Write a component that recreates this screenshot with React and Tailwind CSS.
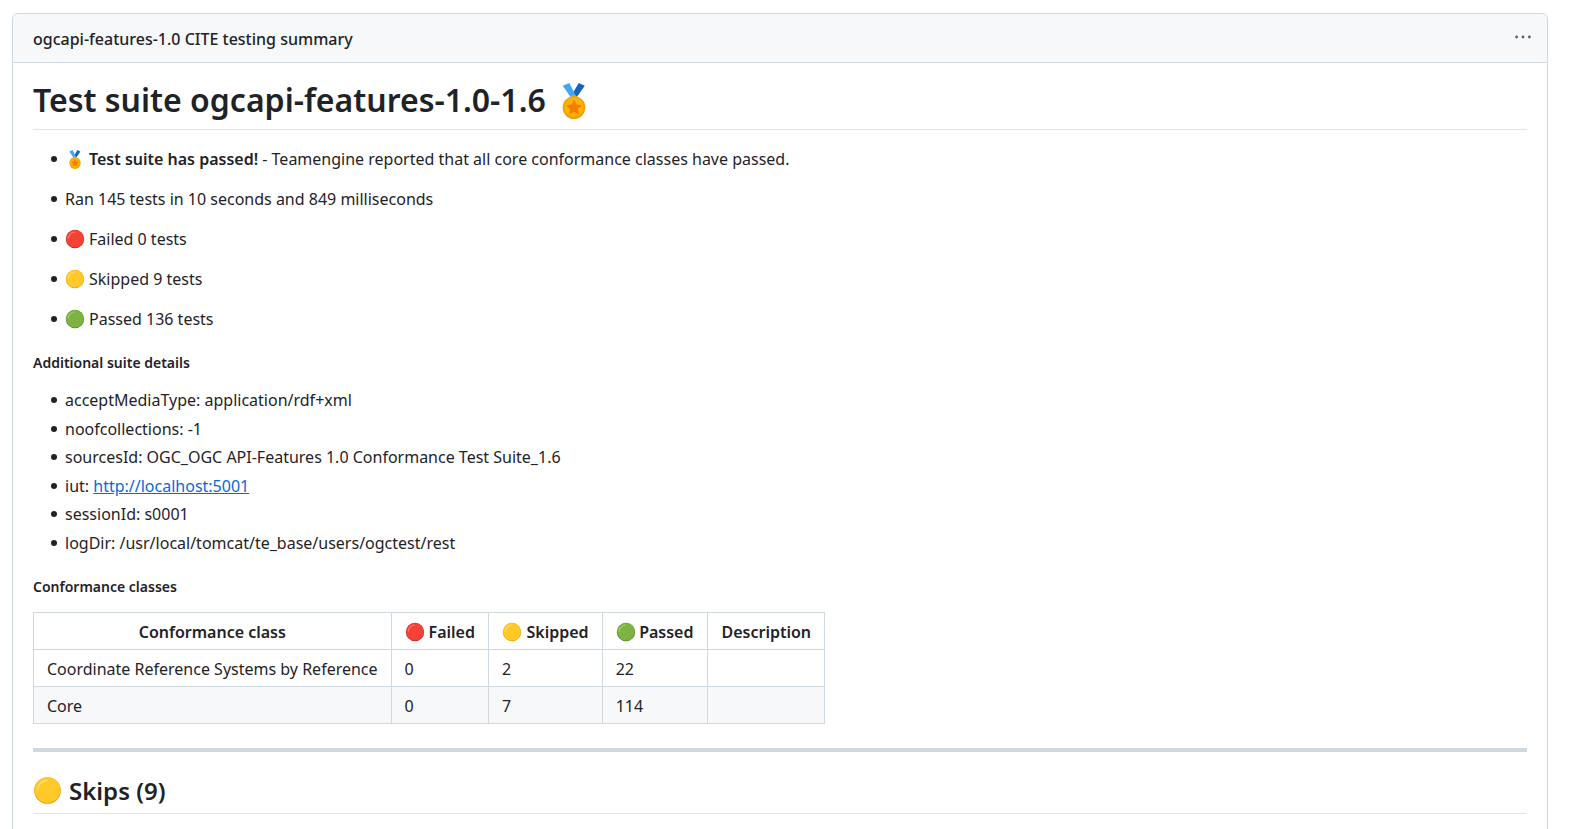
const Dot = ({ c, d, h, size = 20, className = "" }) => (
  <svg viewBox="0 0 20 20" width={size} height={size} className={`inline-block shrink-0 align-[-4px] ${className}`}>
    <circle cx="10" cy="10" r="9.2" fill={d} />
    <circle cx="10" cy="9.7" r="8.8" fill={c} />
    <path d="M3.2 9.5A6.8 6.8 0 0 1 9.5 3" fill="none" stroke={h} strokeWidth="1.1" strokeLinecap="round" opacity="0.75" />
  </svg>
);
const Red = (p) => <Dot c="#f44336" d="#c62828" h="#ff8a80" {...p} />;
const Yellow = (p) => <Dot c="#ffca28" d="#f59e0b" h="#ffe082" {...p} />;
const Green = (p) => <Dot c="#7cb342" d="#558b2f" h="#aed581" {...p} />;

const Medal = ({ w = 24, h = 36, className = "" }) => (
  <svg viewBox="0 0 24 36" width={w} height={h} preserveAspectRatio="none" className={`inline-block shrink-0 ${className}`}>
    <path d="M16.7 0L22.8 2.7 14.5 14.5 10 11.6z" fill="#1565c0" />
    <path d="M0.7 2.7L7.3 0 14.5 14 9 14.5z" fill="#42a5f5" />
    <circle cx="12" cy="15.5" r="2.6" fill="none" stroke="#f9a825" strokeWidth="1.4" />
    <circle cx="12" cy="24.6" r="11.4" fill="#f59e0b" />
    <circle cx="12" cy="24.2" r="9.6" fill="#ffb300" />
    <path d="M12 16.6l2.4 4.9 5.4.7-3.9 3.8 1 5.4-4.9-2.6-4.9 2.6 1-5.4-3.9-3.8 5.4-.7z" fill="#f57c00" />
  </svg>
);

const Item = ({ children, className = "" }) => (
  <li className={`flex ${className}`}>
    <span className="w-[6px] h-[6px] rounded-full bg-[#1f2328] mt-[9px] mr-[8px] shrink-0" />
    <div className="min-w-0">{children}</div>
  </li>
);

const cell = "border border-[#d1d9e0] px-[13px] pt-[7px] pb-[5px]";
const head = `${cell} font-semibold`;

export default function App() {
  return (
    <div className="bg-white pt-[13px] pl-3 h-[829px] overflow-hidden text-[#1f2328] text-base leading-6 font-['Noto_Sans',sans-serif]">
      <div className="border border-[#d1d9e0] rounded-md w-[1536px] overflow-hidden h-[900px]">
        <div className="flex items-center justify-between h-[49px] bg-[#f6f8fa] border-b border-[#d1d9e0] pl-5 pr-[16px]">
          <span className="text-base leading-6 font-medium pt-[2px]">ogcapi-features-1.0 CITE testing summary</span>
          <svg viewBox="0 0 16 4" width="16" height="4" className="mb-[2px]" fill="#59636e">
            <circle cx="1.6" cy="2" r="1.4" />
            <circle cx="8" cy="2" r="1.4" />
            <circle cx="14.4" cy="2" r="1.4" />
          </svg>
        </div>
        <div className="px-5 pt-[17px]">
          <h1 className="flex items-center text-[32px] leading-[40px] font-semibold border-b border-[#d1d9e0b3] pb-[9px] mb-[17px]">
            Test suite ogcapi-features-1.0-1.6
            <Medal w={24} h={36} className="ml-[16px] mt-[1px]" />
          </h1>
          <ul className="pl-[18px]">
            <Item>
              <p className="mb-4 flex items-center">
                <Medal w={12} h={19} className="ml-[4px] mr-[8px]" />
                <strong className="font-semibold">Test suite has passed!</strong>
                <span className="whitespace-pre"> - Teamengine reported that all core conformance classes have passed.</span>
              </p>
            </Item>
            <Item><p className="mb-4">Ran 145 tests in 10 seconds and 849 milliseconds</p></Item>
            <Item><p className="mb-4"><Red className="mr-[4px]" />Failed 0 tests</p></Item>
            <Item><p className="mb-4"><Yellow className="mr-[4px]" />Skipped 9 tests</p></Item>
            <Item><p className="mb-4"><Green className="mr-[4px]" />Passed 136 tests</p></Item>
          </ul>
          <h5 className="text-sm font-semibold leading-[18px] mt-[7px] mb-4">Additional suite details</h5>
          <ul className="pl-[18px] space-y-[4.6px]">
            <Item>acceptMediaType: application/rdf+xml</Item>
            <Item>noofcollections: -1</Item>
            <Item>sourcesId: OGC_OGC API-Features 1.0 Conformance Test Suite_1.6</Item>
            <Item>iut: <a href="#" className="text-[#0969da] underline">http://localhost:5001</a></Item>
            <Item>sessionId: s0001</Item>
            <Item>logDir: /usr/local/tomcat/te_base/users/ogctest/rest</Item>
          </ul>
          <h5 className="text-sm font-semibold leading-[18px] mt-[23px] mb-4">Conformance classes</h5>
          <table className="border-collapse">
            <thead>
              <tr>
                <th className={`${head} text-center`}>Conformance class</th>
                <th className={`${head} text-left`}><Red className="mr-[4px]" />Failed</th>
                <th className={`${head} text-left`}><Yellow className="mr-[4.5px]" />Skipped</th>
                <th className={`${head} text-left`}><Green className="mr-[3.5px]" /><span className="pr-[1px]">Passed</span></th>
                <th className={`${head} text-left`}>Description</th>
              </tr>
            </thead>
            <tbody>
              <tr>
                <td className={cell}>Coordinate Reference Systems by Reference</td>
                <td className={cell}>0</td>
                <td className={cell}>2</td>
                <td className={cell}>22</td>
                <td className={cell}></td>
              </tr>
              <tr className="bg-[#f6f8fa]">
                <td className={cell}>Core</td>
                <td className={cell}>0</td>
                <td className={cell}>7</td>
                <td className={cell}>114</td>
                <td className={cell}></td>
              </tr>
            </tbody>
          </table>
          <hr className="h-1 bg-[#d1d9e0] border-0 mt-6 mb-6" />
          <h2 className="flex items-center text-2xl leading-[30px] font-semibold border-b border-[#d1d9e0b3] pb-[7px]">
            <Yellow size={29} className="mr-[7px]" />Skips (9)
          </h2>
        </div>
      </div>
    </div>
  );
}
